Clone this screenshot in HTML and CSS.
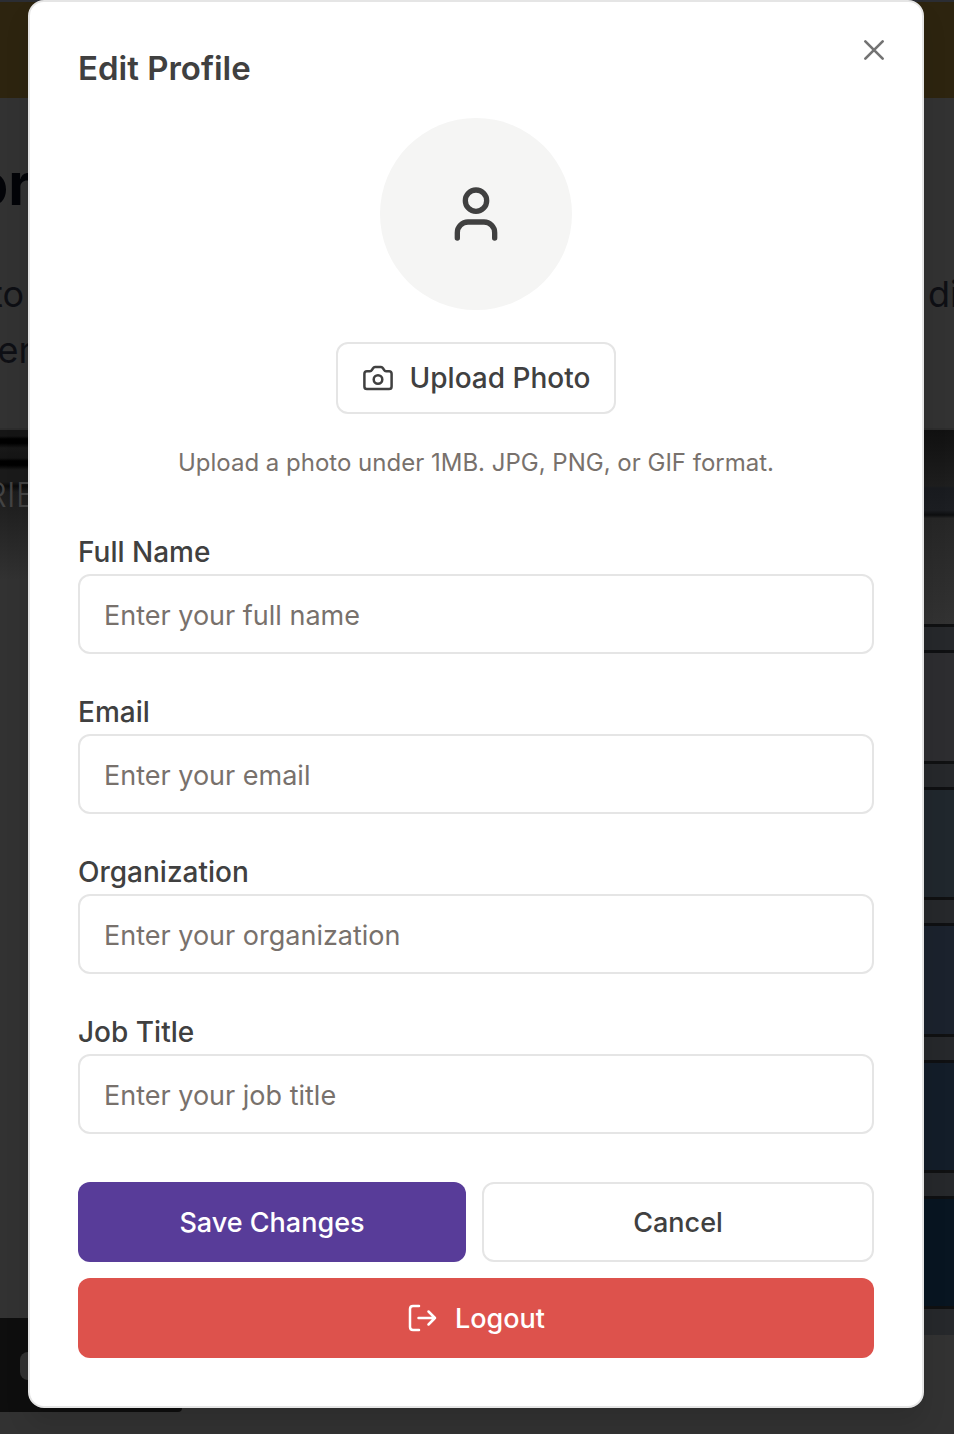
FILE: index.html
```html
<!DOCTYPE html>
<html lang="en">
<head>
<meta charset="utf-8">
<meta name="viewport" content="width=device-width, initial-scale=1">
<title>Edit Profile</title>
<link rel="stylesheet" href="styles.css">
</head>
<body>
<div class="stage">
  <div class="page" aria-hidden="true">
    <div class="banner"></div>
    <div class="hero">
      <div class="hero-row hero-title"><span class="edge">or</span></div>
      <div class="hero-row hero-text"><span class="edge edge-word">to</span><span class="edge-right">di</span></div>
      <div class="hero-row hero-text"><span class="edge">er</span></div>
    </div>
    <div class="media">
      <div class="media-left">
        <div class="poster"><span class="edge poster-text">RIE</span></div>
        <div class="controls"><span class="chip"></span></div>
      </div>
      <div class="media-right">
        <div class="shade"></div>
        <div class="wall"></div>
        <div class="ledge"></div>
        <div class="panel panel-1"></div>
        <div class="ledge"></div>
        <div class="panel panel-2"></div>
        <div class="ledge"></div>
        <div class="panel panel-3"></div>
        <div class="ledge"></div>
        <div class="panel panel-4"></div>
        <div class="ledge"></div>
        <div class="panel panel-5"></div>
        <div class="ledge ledge-last"></div>
      </div>
    </div>
  </div>

  <main class="dialog" role="dialog" aria-labelledby="dialog-title">
    <button class="close" type="button" aria-label="Close">
      <svg viewBox="0 0 24 24" width="32" height="32"><path d="M5.500 5.500l13 13M18.500 5.500l-13 13"/></svg>
    </button>
    <h1 class="title" id="dialog-title">Edit Profile</h1>
    <div class="photo">
      <div class="avatar">
        <svg viewBox="0 0 24 24" width="64" height="64"><circle cx="12" cy="7" r="4"/><path d="M5 21v-2a4 4 0 0 1 4-4h6a4 4 0 0 1 4 4v2"/></svg>
      </div>
      <button class="btn btn-outline btn-upload" type="button">
        <svg viewBox="0 0 32 32" width="32" height="32"><path d="M13 5h6q1.200 0 1.800 1l1.400 2.200q.6 1 1.800 1h3q2.600 0 2.600 2.600v12.600q0 2.600-2.600 2.600H5q-2.600 0-2.600-2.600V11.800q0-2.600 2.600-2.600h3q1.200 0 1.800-1L11.200 6q.6-1 1.800-1Z"/><circle cx="16" cy="17.500" r="4.300"/></svg>
        Upload Photo
      </button>
      <p class="hint">Upload a photo under 1MB. JPG, PNG, or GIF format.</p>
    </div>
    <form class="form">
      <div class="field">
        <label for="full-name">Full Name</label>
        <input id="full-name" type="text" placeholder="Enter your full name">
      </div>
      <div class="field">
        <label for="email">Email</label>
        <input id="email" type="email" placeholder="Enter your email">
      </div>
      <div class="field">
        <label for="organization">Organization</label>
        <input id="organization" type="text" placeholder="Enter your organization">
      </div>
      <div class="field">
        <label for="job-title">Job Title</label>
        <input id="job-title" type="text" placeholder="Enter your job title">
      </div>
      <div class="actions">
        <div class="actions-row">
          <button class="btn btn-primary" type="submit">Save Changes</button>
          <button class="btn btn-outline" type="button">Cancel</button>
        </div>
        <button class="btn btn-danger" type="button">
          <svg viewBox="0 0 32 32" width="32" height="32"><path d="M12 4H6Q3 4 3 7v18q0 3 3 3h6M11.500 16H28M21.500 9.500L28 16l-6.500 6.500"/></svg>
          Logout
        </button>
      </div>
    </form>
  </main>
</div>
</body>
</html>
```
FILE: styles.css
```css
* {
  box-sizing: border-box;
}

body {
  margin: 0;
  background: #323232;
  color: #404040;
  font-family: Inter, "Liberation Sans", sans-serif;
  font-size: 28px;
}

.stage {
  display: grid;
  grid-template-columns: minmax(0, 1fr);
  min-height: 100vh;
}

.page,
.dialog {
  grid-area: 1 / 1;
}

/* Dimmed page behind the dialog */
.page {
  display: flex;
  flex-direction: column;
  overflow: hidden;
}

.banner {
  height: 98px;
  border-top: 2px solid #2b2d33;
  background: #2d240f;
}

.hero {
  height: 332px;
  padding-top: 48px;
  border-bottom: 2px solid #2d2d2d;
  color: #0e0f14;
}

.hero-row {
  display: flex;
  justify-content: space-between;
}

.edge {
  display: flex;
  justify-content: flex-end;
  width: 32px;
}

.edge-word {
  width: 24px;
}

.edge-right {
  width: 26px;
}

.hero-title {
  height: 120px;
  font-size: 58px;
  font-weight: 700;
  line-height: 76px;
  color: #030408;
}

.hero-text {
  font-size: 36px;
  line-height: 56px;
}

.media {
  display: flex;
  justify-content: space-between;
}

.media-left {
  width: 182px;
}

.poster {
  height: 888px;
  padding-top: 45px;
  background: linear-gradient(#151515 0, #151515 6px, #000 9px, #000 13px, #181818 18px, #151515 28px, #000 31px, #000 35px, #1a1a1a 40px, #1a1a1a 52px, #0a0a0a 56px, #1c1c1c 62px, #323232 150px);
}

.poster-text {
  width: 36px;
  font-size: 34px;
  font-weight: 300;
  line-height: 40px;
  color: #434343;
}

.controls {
  display: flex;
  height: 94px;
  padding: 34px 20px;
  border-radius: 0 0 4px 0;
  background: #0e0e0e;
}

.chip {
  width: 60px;
  height: 28px;
  border-radius: 8px;
  background: #323232;
}

.media-right {
  width: 60px;
}

.shade {
  height: 88px;
  background: linear-gradient(#111 0, #1e1e1e 56px, #191b1f 58px, #1c1e22 80px, #0d0e10 85px, #242424 88px);
}

.wall {
  height: 106px;
  background: linear-gradient(#262626, #323232);
}

.ledge {
  height: 29px;
  border-top: 3px solid #101112;
  border-bottom: 3px solid #0f1012;
  background: #26282b;
}

.panel {
  height: 108px;
}

.panel-1 { background: #2d2d30; }
.panel-2 { height: 107px; background: #20272d; }
.panel-3 { background: #1b222d; }
.panel-4 { height: 107px; background: #131d29; }
.panel-5 { height: 107px; background: #081521; }

.ledge-last {
  border-bottom-color: #26282b;
}

/* Dialog */
.dialog {
  position: relative;
  align-self: start;
  margin: 0 30px 26px 28px;
  padding: 48px;
  border: 2px solid #e5e5e5;
  border-radius: 16px;
  background: #fff;
  box-shadow: 0 16px 24px rgba(0, 0, 0, 0.1);
}

svg {
  flex: none;
  fill: none;
  stroke: currentColor;
  stroke-width: 2.500;
  stroke-linecap: round;
  stroke-linejoin: round;
}

.close {
  position: absolute;
  top: 32px;
  right: 32px;
  display: flex;
  padding: 0;
  border: 0;
  background: none;
  color: #737373;
}

.close svg {
  stroke-width: 2;
}

.title {
  margin: 0 0 32px;
  font-size: 33px;
  font-weight: 600;
  line-height: 36px;
}

.photo {
  display: flex;
  flex-direction: column;
  align-items: center;
  gap: 32px;
}

.avatar {
  display: flex;
  align-items: center;
  justify-content: center;
  width: 192px;
  height: 192px;
  border-radius: 50%;
  background: #f5f5f4;
}

.avatar svg {
  stroke-width: 2;
}

.hint {
  margin: 0;
  font-size: 24px;
  line-height: 34px;
  text-align: center;
  color: #78716c;
}

.form {
  display: flex;
  flex-direction: column;
  gap: 36px;
  margin-top: 50px;
}

.field {
  display: flex;
  flex-direction: column;
}

.field label {
  font-weight: 500;
  line-height: 44px;
}

.field input {
  width: 100%;
  height: 80px;
  padding: 2px 24px 0;
  border: 2px solid #e5e5e5;
  border-radius: 12px;
  background: #fff;
  color: #404040;
  font: inherit;
  font-size: 27px;
}

.field input::placeholder {
  color: #78716c;
  opacity: 1;
}

.actions {
  display: flex;
  flex-direction: column;
  gap: 16px;
  margin-top: 12px;
}

.actions-row {
  display: flex;
  gap: 16px;
}

.actions-row .btn {
  flex: 1;
}

.btn {
  display: flex;
  align-items: center;
  justify-content: center;
  gap: 16px;
  height: 80px;
  padding: 0 32px;
  border: 0;
  border-radius: 12px;
  font: inherit;
  font-size: 27px;
  font-weight: 500;
  color: #fff;
}

.btn-outline {
  border: 2px solid #e5e5e5;
  background: #fff;
  color: #404040;
}

.btn-upload {
  height: 72px;
  padding: 0 24px;
  font-size: 28px;
}

.btn-primary {
  background: #583c99;
}

.btn-danger {
  background: #dd524c;
}
```
